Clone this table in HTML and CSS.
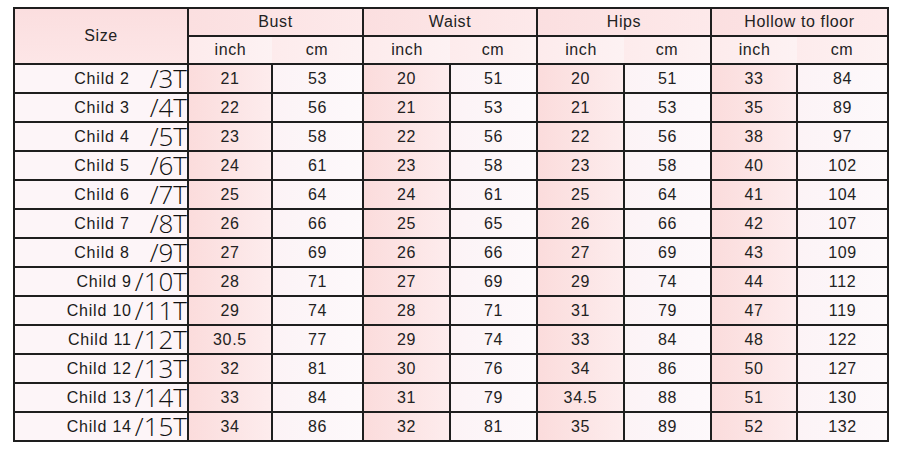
FILE: index.html
```html
<!DOCTYPE html>
<html>
<head>
<meta charset="utf-8">
<link rel="stylesheet" href="styles.css">
</head>
<body>
<div class="page">
<table class="chart">
  <colgroup>
    <col class="c-size"><col class="c-bi"><col class="c-bc"><col class="c-wi"><col class="c-wc"><col class="c-hi"><col class="c-hc"><col class="c-fi"><col class="c-fc">
  </colgroup>
  <thead>
    <tr class="h1">
      <th rowspan="2" class="size-head">Size</th>
      <th colspan="2">Bust</th>
      <th colspan="2">Waist</th>
      <th colspan="2">Hips</th>
      <th colspan="2">Hollow to floor</th>
    </tr>
    <tr class="h2">
      <th class="u-in">inch</th><th class="u-cm">cm</th>
      <th class="u-in">inch</th><th class="u-cm">cm</th>
      <th class="u-in">inch</th><th class="u-cm">cm</th>
      <th class="u-in">inch</th><th class="u-cm">cm</th>
    </tr>
  </thead>
  <tbody>
    <tr><td class="size"><span class="child">Child 2</span><span class="t t-one">/3T</span></td><td class="in">21</td><td class="cm">53</td><td class="in">20</td><td class="cm">51</td><td class="in">20</td><td class="cm">51</td><td class="in">33</td><td class="cm">84</td></tr>
    <tr><td class="size"><span class="child">Child 3</span><span class="t t-one">/4T</span></td><td class="in">22</td><td class="cm">56</td><td class="in">21</td><td class="cm">53</td><td class="in">21</td><td class="cm">53</td><td class="in">35</td><td class="cm">89</td></tr>
    <tr><td class="size"><span class="child">Child 4</span><span class="t t-one">/5T</span></td><td class="in">23</td><td class="cm">58</td><td class="in">22</td><td class="cm">56</td><td class="in">22</td><td class="cm">56</td><td class="in">38</td><td class="cm">97</td></tr>
    <tr><td class="size"><span class="child">Child 5</span><span class="t t-one">/6T</span></td><td class="in">24</td><td class="cm">61</td><td class="in">23</td><td class="cm">58</td><td class="in">23</td><td class="cm">58</td><td class="in">40</td><td class="cm">102</td></tr>
    <tr><td class="size"><span class="child">Child 6</span><span class="t t-one">/7T</span></td><td class="in">25</td><td class="cm">64</td><td class="in">24</td><td class="cm">61</td><td class="in">25</td><td class="cm">64</td><td class="in">41</td><td class="cm">104</td></tr>
    <tr><td class="size"><span class="child">Child 7</span><span class="t t-one">/8T</span></td><td class="in">26</td><td class="cm">66</td><td class="in">25</td><td class="cm">65</td><td class="in">26</td><td class="cm">66</td><td class="in">42</td><td class="cm">107</td></tr>
    <tr><td class="size"><span class="child">Child 8</span><span class="t t-one">/9T</span></td><td class="in">27</td><td class="cm">69</td><td class="in">26</td><td class="cm">66</td><td class="in">27</td><td class="cm">69</td><td class="in">43</td><td class="cm">109</td></tr>
    <tr><td class="size"><span class="child">Child 9</span><span class="t">/10T</span></td><td class="in">28</td><td class="cm">71</td><td class="in">27</td><td class="cm">69</td><td class="in">29</td><td class="cm">74</td><td class="in">44</td><td class="cm">112</td></tr>
    <tr><td class="size"><span class="child">Child 10</span><span class="t">/11T</span></td><td class="in">29</td><td class="cm">74</td><td class="in">28</td><td class="cm">71</td><td class="in">31</td><td class="cm">79</td><td class="in">47</td><td class="cm">119</td></tr>
    <tr><td class="size"><span class="child">Child 11</span><span class="t">/12T</span></td><td class="in">30.5</td><td class="cm">77</td><td class="in">29</td><td class="cm">74</td><td class="in">33</td><td class="cm">84</td><td class="in">48</td><td class="cm">122</td></tr>
    <tr><td class="size"><span class="child">Child 12</span><span class="t">/13T</span></td><td class="in">32</td><td class="cm">81</td><td class="in">30</td><td class="cm">76</td><td class="in">34</td><td class="cm">86</td><td class="in">50</td><td class="cm">127</td></tr>
    <tr><td class="size"><span class="child">Child 13</span><span class="t">/14T</span></td><td class="in">33</td><td class="cm">84</td><td class="in">31</td><td class="cm">79</td><td class="in">34.5</td><td class="cm">88</td><td class="in">51</td><td class="cm">130</td></tr>
    <tr><td class="size"><span class="child">Child 14</span><span class="t">/15T</span></td><td class="in">34</td><td class="cm">86</td><td class="in">32</td><td class="cm">81</td><td class="in">35</td><td class="cm">89</td><td class="in">52</td><td class="cm">132</td></tr>
  </tbody>
</table>
</div>
</body>
</html>
```

FILE: styles.css
```css
html, body {
  margin: 0;
  padding: 0;
  background: #ffffff;
}
.page {
  padding: 7px 0 0 13px;
}
.chart {
  border-collapse: collapse;
  table-layout: fixed;
  width: 874px;
  font-family: "Liberation Sans", Arial, sans-serif;
  font-size: 16px;
  color: #222;
  border: 2px solid #1e1e1e;
}
.c-size { width: 174px; }
.c-bi { width: 84px; }
.c-bc { width: 91px; }
.c-wi { width: 87px; }
.c-wc { width: 87px; }
.c-hi { width: 87px; }
.c-hc { width: 87px; }
.c-fi { width: 86px; }
.c-fc { width: 91px; }

.chart th {
  font-weight: normal;
  letter-spacing: 0.6px;
  padding: 0;
  border: 2px solid #1e1e1e;
}
.h1 th {
  height: 26px;
  background: linear-gradient(to right, #fbdfe0, #fde9ea);
}
.size-head {
  background: linear-gradient(to bottom, #fbdedf, #fde6e7) !important;
  vertical-align: middle;
}
.h2 th {
  height: 26px;
  background: linear-gradient(to right, #fdebec, #fdf2f3);
}
.h2 th.u-in { border-right: none; }
.h2 th.u-cm { border-left: none; }

.chart td {
  padding: 0;
  height: 27px;
  line-height: 18px;
  text-align: center;
  border: 2px solid #1e1e1e;
  letter-spacing: 0.7px;
}
.chart td.size {
  text-align: right;
  background: #fdf5f8;
  white-space: nowrap;
  padding-right: 0;
}
.child {
  letter-spacing: 0.8px;
  color: #1a1a1a;
}
.t {
  font-family: "Open Sans", "DejaVu Sans", sans-serif;
  font-weight: 300;
  font-size: 26px;
  line-height: 0;
  vertical-align: -4px;
  margin-left: 3px;
  color: #111;
  letter-spacing: 0;
}
.t-one {
  margin-left: 20px;
}
.chart td.in {
  background: linear-gradient(to right, #fbdcdc, #fdeced);
}
.chart td.cm {
  background: linear-gradient(to right, #fcf3f6, #fdf9fb);
}
```
